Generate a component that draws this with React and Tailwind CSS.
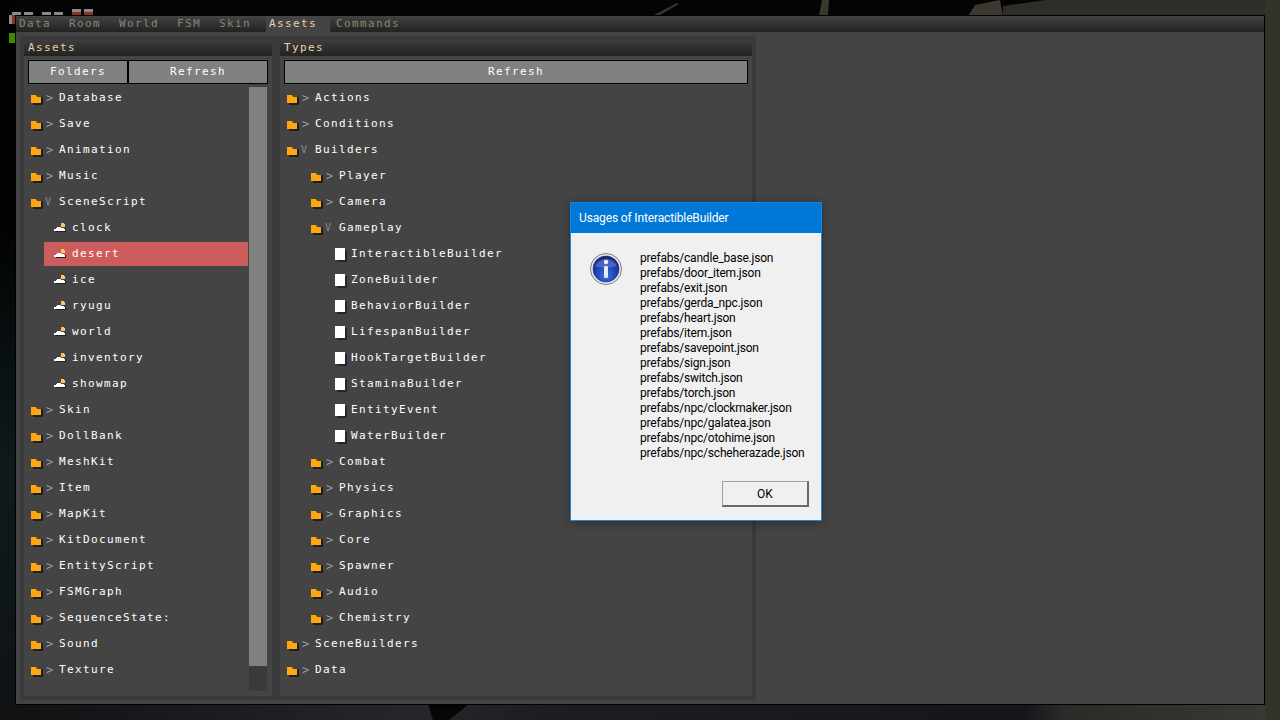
const pixelFont = { fontFamily: '"DejaVu Sans Mono", monospace' }

const tabs = ['Data', 'Room', 'World', 'FSM', 'Skin', 'Assets', 'Commands']

const assetRows = [
  { label: 'Database', open: false },
  { label: 'Save', open: false },
  { label: 'Animation', open: false },
  { label: 'Music', open: false },
  { label: 'SceneScript', open: true },
  { label: 'clock', scene: true },
  { label: 'desert', scene: true, selected: true },
  { label: 'ice', scene: true },
  { label: 'ryugu', scene: true },
  { label: 'world', scene: true },
  { label: 'inventory', scene: true },
  { label: 'showmap', scene: true },
  { label: 'Skin', open: false },
  { label: 'DollBank', open: false },
  { label: 'MeshKit', open: false },
  { label: 'Item', open: false },
  { label: 'MapKit', open: false },
  { label: 'KitDocument', open: false },
  { label: 'EntityScript', open: false },
  { label: 'FSMGraph', open: false },
  { label: 'SequenceState:', open: false },
  { label: 'Sound', open: false },
  { label: 'Texture', open: false },
]

const typeRows = [
  { label: 'Actions', depth: 0 },
  { label: 'Conditions', depth: 0 },
  { label: 'Builders', depth: 0, open: true },
  { label: 'Player', depth: 1 },
  { label: 'Camera', depth: 1 },
  { label: 'Gameplay', depth: 1, open: true },
  { label: 'InteractibleBuilder', leaf: true },
  { label: 'ZoneBuilder', leaf: true },
  { label: 'BehaviorBuilder', leaf: true },
  { label: 'LifespanBuilder', leaf: true },
  { label: 'HookTargetBuilder', leaf: true },
  { label: 'StaminaBuilder', leaf: true },
  { label: 'EntityEvent', leaf: true },
  { label: 'WaterBuilder', leaf: true },
  { label: 'Combat', depth: 1 },
  { label: 'Physics', depth: 1 },
  { label: 'Graphics', depth: 1 },
  { label: 'Core', depth: 1 },
  { label: 'Spawner', depth: 1 },
  { label: 'Audio', depth: 1 },
  { label: 'Chemistry', depth: 1 },
  { label: 'SceneBuilders', depth: 0 },
  { label: 'Data', depth: 0 },
]

const usages = [
  'prefabs/candle_base.json',
  'prefabs/door_item.json',
  'prefabs/exit.json',
  'prefabs/gerda_npc.json',
  'prefabs/heart.json',
  'prefabs/item.json',
  'prefabs/savepoint.json',
  'prefabs/sign.json',
  'prefabs/switch.json',
  'prefabs/torch.json',
  'prefabs/npc/clockmaker.json',
  'prefabs/npc/galatea.json',
  'prefabs/npc/otohime.json',
  'prefabs/npc/scheherazade.json',
]

function Backdrop() {
  return (
    <svg className="absolute inset-0" width="1280" height="720" viewBox="0 0 1280 720">
      <defs>
        <linearGradient id="bottom" x1="0" x2="1" y1="0" y2="0">
          <stop offset="0" stopColor="#0f1113" />
          <stop offset="0.33" stopColor="#26272b" />
          <stop offset="0.42" stopColor="#1c1e22" />
          <stop offset="0.8" stopColor="#141619" />
          <stop offset="0.83" stopColor="#2a2b28" />
          <stop offset="1" stopColor="#3a3932" />
        </linearGradient>
        <linearGradient id="left" x1="0" x2="0" y1="0" y2="1">
          <stop offset="0.3" stopColor="#020202" />
          <stop offset="0.65" stopColor="#0e1a1c" />
          <stop offset="1" stopColor="#101214" />
        </linearGradient>
      </defs>
      <rect width="1280" height="720" fill="#040404" />
      <rect width="15" height="720" fill="url(#left)" />
      <rect y="704" width="1280" height="16" fill="url(#bottom)" />
      <polygon points="428,704 469,704 449,720 433,720" fill="#060606" />
      <polygon points="652,16 677,3 679,4 658,16" fill="#38352c" />
      <polygon points="819,16 822,0 829,0 828,16" fill="#3a382f" />
      <polygon points="968,16 975,5 1000,0 1003,16" fill="#3a382f" />
      <polygon points="1003,6 1045,0 1280,0 1280,16 1003,16" fill="#2e2d27" />
      <rect x="1265" y="0" width="15" height="720" fill="#33322b" />
    </svg>
  )
}

function HudMarks() {
  return (
    <div className="absolute left-[9px] top-[9px] w-[90px] h-[36px]">
      <div className="absolute left-[3px] top-[3px] w-[9px] h-[3px] bg-[#8a8a8a]" />
      <div className="absolute left-[15px] top-[3px] w-[9px] h-[3px] bg-[#8a8a8a]" />
      <div className="absolute left-[33px] top-[3px] w-[9px] h-[3px] bg-[#8a8a8a]" />
      <div className="absolute left-[45px] top-[3px] w-[9px] h-[3px] bg-[#8a8a8a]" />
      <div className="absolute left-[63px] top-0 w-[9px] h-[3px] bg-[#8a8a8a]" />
      <div className="absolute left-[63px] top-[3px] w-[9px] h-[3px] bg-[#8c3020]" />
      <div className="absolute left-[75px] top-0 w-[9px] h-[3px] bg-[#8a8a8a]" />
      <div className="absolute left-[75px] top-[3px] w-[9px] h-[3px] bg-[#8c3020]" />
      <div className="absolute left-0 top-[6px] w-[3px] h-[9px] bg-[#8a8a8a]" />
      <div className="absolute left-[3px] top-[6px] w-[3px] h-[9px] bg-[#8c3020]" />
      <div className="absolute left-0 top-[24px] w-[6px] h-[10px] bg-[#3f8a00]" />
    </div>
  )
}

function FolderIcon() {
  return (
    <svg width="14" height="14" viewBox="0 0 14 14" className="block">
      <path d="M10 6h2v8H2v-2h8z" fill="#1f1f1f" />
      <path d="M0 4h5l1 2h4v6H0z" fill="#ffa50f" />
    </svg>
  )
}

function SceneIcon() {
  return (
    <svg width="14" height="12" viewBox="0 0 14 12" className="block">
      <path d="M7 1h3v1h1v3H7z" fill="#fbc65a" />
      <path d="M2 9h10v1H2zM11 7h1v2h-1z" fill="#1f1f1f" />
      <path d="M0 9V7h2V6h1V5h4v1h3v1h1v2z" fill="#fff" />
    </svg>
  )
}

function LeafIcon() {
  return (
    <div className="w-[10px] h-3 bg-white shadow-[2px_2px_0_#262626]" />
  )
}

function Label({ children, className = '' }) {
  return <span className={`text-[11px] leading-none tracking-[1.38px] whitespace-nowrap -mt-[1px] ${className}`} style={pixelFont}>{children}</span>
}

function FolderRow({ label, open, pad }) {
  return (
    <div className={`h-6 flex items-center ${pad}`}>
      <div className="w-[14px] shrink-0"><FolderIcon /></div>
      <div className="w-[14px] shrink-0 h-3 flex items-center">
        {open
          ? <span className="text-[10px] leading-none text-[#8c8c8c] -mt-[1px]" style={pixelFont}>V</span>
          : <span className="text-[12px] leading-none text-[#9a9a9a] -mt-[1px] ml-px" style={pixelFont}>&gt;</span>}
      </div>
      <Label className="text-white">{label}</Label>
    </div>
  )
}

function SceneRow({ label, selected }) {
  return (
    <div className={`h-6 ml-5 pl-[10px] flex items-center ${selected ? 'bg-[#cd5c5c]' : ''}`}>
      <div className="w-[18px] shrink-0"><SceneIcon /></div>
      <Label className="text-white">{label}</Label>
    </div>
  )
}

function LeafRow({ label }) {
  return (
    <div className="h-6 pl-[55px] flex items-center">
      <div className="w-4 shrink-0"><LeafIcon /></div>
      <Label className="text-white">{label}</Label>
    </div>
  )
}

function PanelHeader({ title }) {
  return (
    <div className="h-4 flex items-center pl-1 bg-gradient-to-b from-[#3e3e3e] to-[#222222]">
      <Label className="text-[#ecd3a4]">{title}</Label>
    </div>
  )
}

function PixelButton({ label, className }) {
  return (
    <button className={`h-6 border border-black bg-[#808080] flex items-center justify-center ${className}`}>
      <Label className="text-white">{label}</Label>
    </button>
  )
}

function AssetsPanel() {
  return (
    <div className="w-[256px] border-4 border-[#3a3a3a] flex flex-col">
      <PanelHeader title="Assets" />
      <div className="flex px-1 mt-1">
        <PixelButton label="Folders" className="w-[100px]" />
        <PixelButton label="Refresh" className="w-[140px]" />
      </div>
      <div className="flex mt-[2px]">
        <div className="w-[224px] flex flex-col gap-[2px]">
          {assetRows.map(row => row.scene
            ? <SceneRow key={row.label} label={row.label} selected={row.selected} />
            : <FolderRow key={row.label} label={row.label} open={row.open} pad="pl-[7px]" />
          )}
        </div>
        <div className="ml-px mt-px w-[18px] h-[604px] bg-[#3a3a3a]">
          <div className="h-[579px] bg-[#808080]" />
        </div>
      </div>
    </div>
  )
}

function TypesPanel() {
  return (
    <div className="w-[480px] border-4 border-[#3a3a3a] flex flex-col">
      <PanelHeader title="Types" />
      <div className="flex px-1 mt-1">
        <PixelButton label="Refresh" className="w-[464px]" />
      </div>
      <div className="flex flex-col gap-[2px] mt-[2px]">
        {typeRows.map(row => row.leaf
          ? <LeafRow key={row.label} label={row.label} />
          : <FolderRow key={row.label} label={row.label} open={row.open} pad={row.depth ? 'pl-[31px]' : 'pl-[7px]'} />
        )}
      </div>
    </div>
  )
}

function InfoIcon() {
  return (
    <svg width="32" height="32" viewBox="0 0 32 32" className="block">
      <defs>
        <radialGradient id="blue" cx="0.5" cy="0.75" r="0.7">
          <stop offset="0" stopColor="#3f6fe0" />
          <stop offset="0.6" stopColor="#1c3fae" />
          <stop offset="1" stopColor="#14287c" />
        </radialGradient>
      </defs>
      <circle cx="16" cy="16" r="15.5" fill="#e4e6ec" stroke="#7c7f88" strokeWidth="1" />
      <circle cx="16" cy="16" r="13" fill="url(#blue)" stroke="#1a2a6c" strokeWidth="0.6" />
      <path d="M5 13a11.5 10 0 0 1 22 0c-4 2-18 2-22 0z" fill="#7d9ae6" opacity="0.45" />
      <circle cx="16" cy="9" r="2.2" fill="#f2f4fa" />
      <rect x="14" y="13" width="4" height="12" rx="1.2" fill="#e6e9f2" />
    </svg>
  )
}

function UsagesDialog() {
  return (
    <div
      className="absolute left-[570px] top-[202px] w-[252px] h-[319px] border border-[#1a86dc] bg-[#f0f0f0] flex flex-col shadow-[0_2px_10px_rgba(0,0,0,0.35)]"
      style={{ fontFamily: 'Roboto, sans-serif' }}
    >
      <div className="h-[30px] shrink-0 bg-[#0078d7] flex items-center pl-2 text-[12px] tracking-[-0.14px] text-white">
        Usages of InteractibleBuilder
      </div>
      <div className="flex pl-[19px] pt-[20px]">
        <InfoIcon />
        <div className="ml-[18px] -mt-[2px] text-[12px] leading-[15px] tracking-[-0.2px] text-black whitespace-nowrap">
          {usages.map(path => <div key={path}>{path}</div>)}
        </div>
      </div>
      <div className="mt-auto flex justify-end pr-3 pb-[13px]">
        <button className="w-[87px] h-[26px] border border-[#a0a0a0] border-r-2 border-b-2 border-r-[#696969] border-b-[#696969] bg-[#f0f0f0] text-[12px] text-black flex items-center justify-center">
          OK
        </button>
      </div>
    </div>
  )
}

export default function App() {
  return (
    <div className="relative w-[1280px] h-[720px] overflow-hidden bg-black">
      <Backdrop />
      <HudMarks />
      <div className="absolute left-[15px] top-[15px] w-[1250px] h-[690px] border border-black bg-[#444444] flex flex-col">
        <div className="h-4 shrink-0 flex bg-gradient-to-b from-[#434343] to-[#222222]">
          {tabs.map(tab => (
            <div
              key={tab}
              className={`h-4 flex items-center ${tab === 'Assets' ? 'pl-[3px] pr-[13px] bg-[#444444]' : tab === 'Commands' ? 'pl-[6px]' : 'pl-[3px] pr-[15px]'}`}
            >
              <Label className={tab === 'Assets' ? 'text-[#ecd3a4]' : 'text-[#8f8371]'}>{tab}</Label>
            </div>
          ))}
        </div>
        <div className="flex-1 flex pl-1 pt-1 pb-1">
          <AssetsPanel />
          <TypesPanel />
        </div>
      </div>
      <UsagesDialog />
    </div>
  )
}
